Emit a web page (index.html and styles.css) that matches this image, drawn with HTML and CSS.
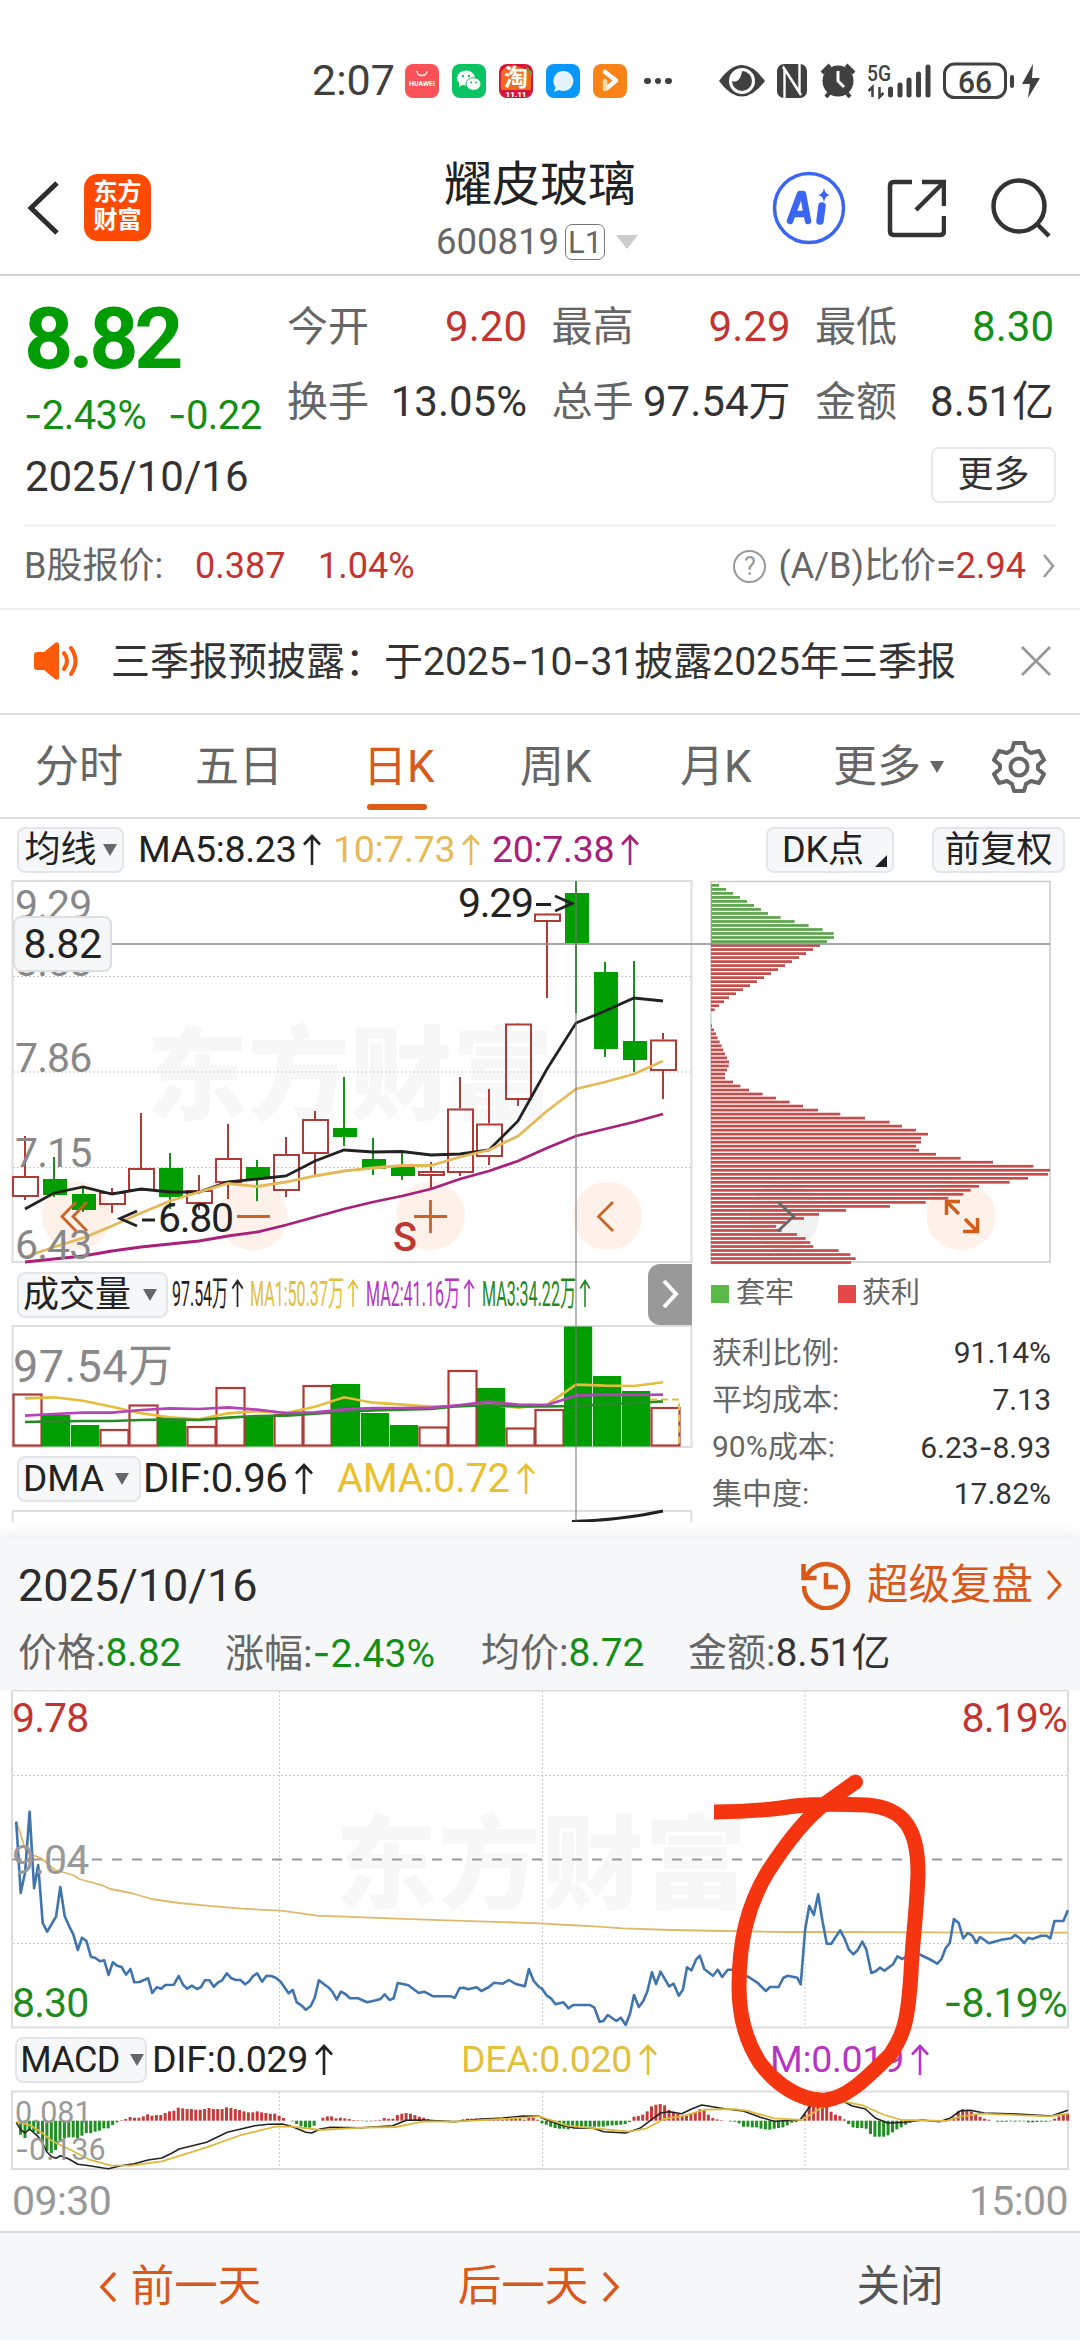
FILE: index.html
```html
<!DOCTYPE html>
<html lang="zh-CN">
<head>
<meta charset="utf-8">
<meta name="viewport" content="width=device-width">
<title>耀皮玻璃 600819</title>
<link rel="stylesheet" href="styles.css">
</head>
<body>
<svg class="defs" width="0" height="0">
  <symbol id="up" viewBox="0 0 20 32" preserveAspectRatio="none"><path d="M10 31V2M2 10.500L10 2l8 8.500" fill="none" stroke="currentColor" stroke-width="2.600"/></symbol>
</svg>
<div class="screen">
  <div class="statusbar">
    <span class="clock">2:07</span>
    <div class="apps">
      <svg width="34" height="34" viewBox="0 0 34 34"><rect width="34" height="34" rx="8" fill="#fb5257"/><path d="M12 7c0 6 10 6 10 0" fill="none" stroke="#fff" stroke-width="1.300"/><text x="17" y="22" font-size="6.500" font-weight="700" text-anchor="middle" fill="#fff" textLength="26" lengthAdjust="spacingAndGlyphs">HUAWEI</text></svg>
      <svg width="34" height="34" viewBox="0 0 34 34"><rect width="34" height="34" rx="8" fill="#09c463"/><ellipse cx="14" cy="14" rx="9" ry="7.500" fill="#fff"/><path d="M7 18l0 5 5-3z" fill="#fff"/><ellipse cx="21.500" cy="20" rx="7.500" ry="6.300" fill="#fff" stroke="#09c463"/><circle cx="11" cy="12" r="1.200" fill="#09c463"/><circle cx="17" cy="12" r="1.200" fill="#09c463"/><circle cx="19" cy="18.500" r="1" fill="#09c463"/><circle cx="24" cy="18.500" r="1" fill="#09c463"/></svg>
      <svg width="34" height="34" viewBox="0 0 34 34"><rect width="34" height="34" rx="8" fill="#d8143c"/><path d="M2 8Q8 0 17 2T32 8V26H2z" fill="#f06a1d"/><path d="M26 1l7 7v5z" fill="#5aa832"/><text x="17" y="22" font-size="24" font-weight="700" text-anchor="middle" fill="#fff">淘</text><text x="17" y="32.500" font-size="8" font-weight="900" text-anchor="middle" fill="#fff">11.11</text></svg>
      <svg width="34" height="34" viewBox="0 0 34 34"><rect width="34" height="34" rx="8" fill="#0897fb"/><path d="M17 7a10 10 0 1 1-4 19l-5 2 1.500-5A10 10 0 0 1 17 7z" fill="#e6f4ff"/></svg>
      <svg width="34" height="34" viewBox="0 0 34 34"><rect width="34" height="34" rx="8" fill="#fa8317"/><path d="M12 8l11 8.500L14 24" fill="none" stroke="#fff" stroke-width="4.500" stroke-linecap="round" stroke-linejoin="round"/><path d="M12 17v8" stroke="#ffd9a8" stroke-width="4.500" stroke-linecap="round"/></svg>
    </div>
    <span class="dots"><i></i><i></i><i></i></span>
    <svg class="sys" width="324" height="40" viewBox="718 61 324 40" fill="#404040">
      <path d="M719 81Q742 49 765 81Q742 112 719 81z"/><circle cx="742" cy="81" r="13" fill="#fff"/><path d="M742 71a10 10 0 1 1-10 10c4 2 9-1 10-10z"/>
      <rect x="777" y="64" width="30" height="34" rx="7"/><path d="M784.500 98V69L801 95M799.500 64V92L783 67" fill="none" stroke="#fff" stroke-width="2.400"/>
      <circle cx="838" cy="81" r="15.500"/><path d="M822 73l8-8M854 73l-8-8M826 97l4-5M850 97l-4-5" stroke="#404040" stroke-width="4"/><path d="M838 71v10l6 6" fill="none" stroke="#fff" stroke-width="3"/>
      <text x="867" y="80.500" font-size="22" font-weight="500" textLength="24" lengthAdjust="spacingAndGlyphs">5G</text>
      <path d="M872.500 97v-10l-4 4M879.500 87v10l4-4" fill="none" stroke="#404040" stroke-width="2.500"/>
      <path d="M890.500 89v6M900 85v10M909 80v15M918.500 74v21M928 67v28" stroke="#404040" stroke-width="5" stroke-linecap="round"/>
      <rect x="944.500" y="64" width="61" height="33.500" rx="10" fill="none" stroke="#404040" stroke-width="3"/>
      <path d="M1012 77v9" stroke="#404040" stroke-width="4" stroke-linecap="round"/>
      <text x="975" y="92.500" font-size="31" font-weight="500" text-anchor="middle" textLength="34" lengthAdjust="spacingAndGlyphs">66</text>
      <path d="M1033 64l-11 20h8l-2 14 12-20h-8z"/>
    </svg>
  </div>

  <header class="header">
    <div class="head-left">
      <svg width="34" height="56" viewBox="0 0 34 56"><path d="M31 3L5 28l26 25" fill="none" stroke="#2d2d2d" stroke-width="5"/></svg>
      <span class="logo">东方<br>财富</span>
    </div>
    <div class="head-title">
      <h1>耀皮玻璃</h1>
      <p><span>600819</span><b>L1</b><i></i></p>
    </div>
    <div class="head-right">
      <svg width="74" height="74" viewBox="0 0 74 74"><circle cx="37" cy="37" r="34.500" fill="none" stroke="#3b66f4" stroke-width="3.500"/><path d="M18 50L28 23h3l5 27M22 43h12" fill="none" stroke="#3b66f4" stroke-width="6.500" stroke-linejoin="round" stroke-linecap="round"/><path d="M50 35l-2 15" stroke="#3b66f4" stroke-width="7.500" stroke-linecap="round"/><path d="M52 17q1 6 6 7-5 1-6 7-1-6-6-7 5-1 6-7z" fill="#3b66f4"/></svg>
      <svg class="share" width="60" height="60" viewBox="0 0 60 60" fill="none" stroke="#333" stroke-width="4.500"><path d="M26 4H8q-4 0-4 4v45q0 4 4 4h46q4 0 4-4V38M30 32L56 6M36 4h22v24"/></svg>
      <svg width="62" height="62" viewBox="0 0 62 62" fill="none" stroke="#333" stroke-width="4.500"><circle cx="28" cy="29" r="25.500"/><path d="M46 47l12 12"/></svg>
    </div>
  </header>

  <section class="quote">
    <div class="quote-main">
      <div class="price">
        <strong>8.82</strong>
        <p><span><u>-</u>2.43%</span><span><u>-</u>0.22</span></p>
      </div>
      <dl class="stats">
        <div><dt>今开</dt><dd class="red">9.20</dd></div>
        <div><dt>最高</dt><dd class="red">9.29</dd></div>
        <div><dt>最低</dt><dd class="green">8.30</dd></div>
        <div><dt>换手</dt><dd>13.05%</dd></div>
        <div><dt>总手</dt><dd>97.54万</dd></div>
        <div><dt>金额</dt><dd>8.51亿</dd></div>
      </dl>
    </div>
    <div class="quote-date"><span>2025/10/16</span><button>更多</button></div>
    <div class="bshare">
      <span class="b1">B股报价:</span><span class="b2 red">0.387</span><span class="b3 red">1.04%</span>
      <span class="help">?</span><span>(A/B)比价=<em class="red">2.94</em></span>
      <svg width="14" height="26" viewBox="0 0 14 26"><path d="M2 2l9 11-9 11" fill="none" stroke="#999" stroke-width="2.500"/></svg>
    </div>
  </section>

  <section class="notice">
    <svg width="48" height="40" viewBox="0 0 48 40"><path d="M1 14q0-3 3-3h7L22 2q4-2 4 2v32q0 4-4 2L11 29H4q-3 0-3-3z" fill="#ff5a0a"/><path d="M31 12q6 8 0 16M38 7q9 13 0 26" fill="none" stroke="#ff5a0a" stroke-width="4" stroke-linecap="round"/></svg>
    <p>三季报预披露：于2025<u>-</u>10<u>-</u>31披露2025年三季报</p>
    <svg width="30" height="30" viewBox="0 0 30 30"><path d="M1 1l28 28M29 1L1 29" stroke="#999" stroke-width="2.800"/></svg>
  </section>

  <nav class="tabs">
    <span>分时</span><span>五日</span><span class="on">日K</span><span>周K</span><span>月K</span><span>更多<i class="tri"></i></span>
    <svg width="54" height="54" viewBox="0 0 54 54" fill="none" stroke="#666" stroke-width="4"><path d="M22 3h10l2 7 5 3 8-2 5 9-6 5v4l6 5-5 9-8-2-5 3-2 7H22l-2-7-5-3-8 2-5-9 6-5v-4l-6-5 5-9 8 2 5-3z" stroke-linejoin="round"/><circle cx="27" cy="27" r="8.500"/></svg>
  </nav>

  <section class="kline">
    <div class="ma-row">
      <span class="chip">均线<i class="tri"></i></span>
      <span class="ma ink">MA5:8.23<svg><use href="#up"/></svg></span>
      <span class="ma gold">10:7.73<svg><use href="#up"/></svg></span>
      <span class="ma plum">20:7.38<svg><use href="#up"/></svg></span>
      <span class="chip dk">DK点<i></i></span>
      <span class="chip">前复权</span>
    </div>
    <div class="k-cols">
      <div class="k-left">
        <svg class="k-chart" width="693" height="384" viewBox="0 881 693 384">
          <text class="wm" x="146" y="1113" font-size="102" textLength="408">东方财富</text>
          <rect x="12.500" y="882" width="679" height="381" class="frame"/>
          <path class="dotline" d="M13 977.500H692M13 1073H692M13 1168.500H692"/>
          <g class="soft"><circle cx="76.500" cy="1217" r="34.500"/><circle cx="253" cy="1217" r="34.500"/><circle cx="430.500" cy="1217" r="34.500"/><circle cx="607.500" cy="1217" r="34.500"/></g>
          <g id="candles"></g>
          <g id="k-lines"></g>
          <g class="axis"><text x="15" y="920">9.29</text><text x="15" y="977">8.58</text><text x="15" y="1073">7.86</text><text x="15" y="1168">7.15</text><text x="15" y="1260">6.43</text></g>
          <g class="note"><text x="458" y="918" textLength="76">9.29</text><path d="M536 905.500h15M555 897l17 7.500-17 7.500M137 1212l-17 7.500 17 7.500M142 1221h13"/><text x="158" y="1233" textLength="76">6.80</text></g>
          <path class="tool" d="M76 1203l-14 14.500 14 14.500M87 1203l-14 14.500 14 14.500M237 1217.500h33M414 1217.500h33M430.500 1201v33M613 1203l-14.500 14.500 14.500 14.500"/>
          <text x="393" y="1252" font-size="41" font-weight="500" fill="#be3632" textLength="24" lengthAdjust="spacingAndGlyphs">S</text>
        </svg>
        <div class="vol-row">
          <span class="chip">成交量<i class="tri"></i></span>
          <svg width="420" height="46" viewBox="172 1273 420 46" font-size="35">
            <text x="172" y="1307" textLength="56" lengthAdjust="spacingAndGlyphs" fill="#222">97.54万</text><use href="#up" x="231" y="1280" width="13" height="29" color="#222" />
            <text x="250" y="1307" textLength="94" lengthAdjust="spacingAndGlyphs" fill="#e4bd3a">MA1:50.37万</text><use href="#up" x="347" y="1280" width="12" height="29" color="#e4bd3a"/>
            <text x="366" y="1307" textLength="94" lengthAdjust="spacingAndGlyphs" fill="#b437c0">MA2:41.16万</text><use href="#up" x="463" y="1280" width="12" height="29" color="#b437c0"/>
            <text x="482" y="1307" textLength="94" lengthAdjust="spacingAndGlyphs" fill="#1f8a20">MA3:34.22万</text><use href="#up" x="579" y="1280" width="12" height="29" color="#1f8a20"/>
          </svg>
          <span class="next"><svg width="20" height="30" viewBox="0 0 20 30"><path d="M4 2l12 13L4 28" fill="none" stroke="#fff" stroke-width="4"/></svg></span>
        </div>
        <svg class="v-chart" width="693" height="124" viewBox="0 1326 693 124">
          <rect x="12.500" y="1327" width="679" height="121" class="frame"/>
          <text x="13" y="1383" font-size="45" fill="#888" textLength="160">97.54万</text>
          <g id="volume"></g>
          <path d="M650 1400.500H679V1446" fill="none" stroke="#e4bd3a" stroke-width="2" stroke-dasharray="7 4"/>
        </svg>
        <div class="dma-row">
          <span class="chip">DMA<i class="tri"></i></span>
          <span class="ma ink">DIF:0.96<svg><use href="#up"/></svg></span>
          <span class="ma yolk">AMA:0.72<svg><use href="#up"/></svg></span>
        </div>
        <svg width="693" height="13" viewBox="0 1510 693 13"><path class="frame" d="M12.500 1523V1512H691.500V1523"/><path d="M572 1522.500Q622 1521 663 1512" fill="none" stroke="#222" stroke-width="3"/></svg>
      </div>
      <div class="k-right">
        <svg width="345" height="384" viewBox="708 881 345 384">
          <rect x="711" y="882.500" width="339" height="380.500" fill="none" stroke="#ccc" stroke-width="1.500"/>
          <circle cx="961" cy="1217" r="34.500" fill="#fef1e9"/><circle cx="784.500" cy="1217" r="34.500" fill="#f2f2f2"/>
          <g id="chips"></g>
          <path d="M778 1203l15.500 14.500-15.500 14.500" fill="none" stroke="#666" stroke-width="2.800"/>
          <path d="M946.500 1216v-13.500h13.500M947 1203l12 12M977.500 1219v13.500H963M977 1232l-12-12" fill="none" stroke="#d55d1a" stroke-width="3.500"/>
        </svg>
        <div class="legend"><i class="g"></i><span>套牢</span><i class="r"></i><span>获利</span></div>
        <dl class="cost">
          <div><dt>获利比例:</dt><dd>91.14%</dd></div>
          <div><dt>平均成本:</dt><dd>7.13</dd></div>
          <div><dt>90%成本:</dt><dd>6.23<u>-</u>8.93</dd></div>
          <div><dt>集中度:</dt><dd>17.82%</dd></div>
        </dl>
      </div>
      <svg class="cross" width="1080" height="641" viewBox="0 882 1080 641"><path d="M112 945H1050" stroke="#888" stroke-width="1.300"/><path d="M576 882V1522" stroke="#777" stroke-opacity=".7" stroke-width="1.500"/></svg>
      <span class="cross-label">8.82</span>
    </div>
  </section>

  <section class="replay">
    <div class="replay-head">
      <div class="r1"><span>2025/10/16</span>
        <a><svg width="50" height="50" viewBox="0 0 50 50" fill="none" stroke="#d9591a" stroke-width="4.500"><path d="M3 26A22 22 0 1 0 9 11L5 16M2.500 4v14h13M25 13v14h12"/></svg>超级复盘<svg width="18" height="32" viewBox="0 0 18 32"><path d="M3 2l12 14L3 30" fill="none" stroke="#d9591a" stroke-width="3"/></svg></a>
      </div>
      <div class="r2"><span>价格:<em class="green">8.82</em></span><span>涨幅:<em class="green"><u>-</u>2.43%</em></span><span>均价:<em class="green">8.72</em></span><span>金额:<em>8.51亿</em></span></div>
    </div>
    <svg class="m-chart" width="1080" height="340" viewBox="0 1690 1080 340">
      <text class="wm" x="335" y="1902" font-size="102" textLength="412">东方财富</text>
      <rect x="12" y="1691.500" width="1056" height="337" class="frame"/>
      <path class="dotline" d="M13 1776.500H1068M13 1944.500H1068M279.500 1692V2028M542.500 1692V2028M805 1692V2028"/>
      <path d="M12 1860.500H1068" stroke="#999" stroke-width="2" stroke-dasharray="10 10"/>
      <g id="minute"></g>
      <g class="m-axis"><text x="12" y="1733" fill="#c33430">9.78</text><text x="1067" y="1733" fill="#c33430" text-anchor="end">8.19%</text><text x="12" y="1875" fill="#999">9.04</text><text x="12" y="2018" fill="#1f8a20">8.30</text><text x="1067" y="2018" fill="#1f8a20" text-anchor="end"><tspan class="dash">-</tspan>8.19%</text></g>
    </svg>
    <div class="macd-row">
      <span class="chip">MACD<i class="tri"></i></span>
      <span class="ma ink">DIF:0.029<svg><use href="#up"/></svg></span>
      <span class="ma yolk2">DEA:0.020<svg><use href="#up"/></svg></span>
      <span class="ma mag">M:0.019<svg><use href="#up"/></svg></span>
    </div>
    <svg class="d-chart" width="1080" height="81" viewBox="0 2091 1080 81">
      <rect x="12" y="2092.500" width="1056" height="77.500" class="frame"/>
      <path class="dotline" d="M279.500 2093V2170M542.500 2093V2170M805 2093V2170"/>
      <g id="macd"></g>
      <g font-size="30.500" fill="#999"><text x="15" y="2124">0.081</text><text x="15" y="2161"><tspan class="dash">-</tspan>0.136</text></g>
    </svg>
    <div class="times"><span>09:30</span><span>15:00</span></div>
  </section>

  <footer class="foot">
    <span class="o"><svg width="20" height="34" viewBox="0 0 20 34"><path d="M17 3L4 17l13 14" fill="none" stroke="#d9591a" stroke-width="3.500"/></svg>前一天</span>
    <span class="o">后一天<svg width="20" height="34" viewBox="0 0 20 34"><path d="M3 3l13 14L3 31" fill="none" stroke="#d9591a" stroke-width="3.500"/></svg></span>
    <span>关闭</span>
  </footer>
  <svg class="scribble" width="240" height="350" viewBox="700 1765 240 350"><path d="M714 1812C746 1812 770 1810 795 1806C820 1803 845 1804 867 1805C905 1808 918 1830 918 1873C917 1910 912 1945 911 1973C908 2020 904 2035 890 2055C870 2074 850 2097 826 2100C800 2102 775 2083 760 2063C745 2040 739 2015 739 1987C739 1940 748 1905 767 1873C785 1845 805 1818 826 1803L855.500 1782" fill="none" stroke="#f53510" stroke-width="15" stroke-linejoin="round"/><circle cx="855.500" cy="1782" r="7.500" fill="#f53510"/></svg>
</div>
<script src="charts.js"></script>
</body>
</html>
```
FILE: styles.css
```css
* { box-sizing: border-box; margin: 0; padding: 0; }
body { background: #fff; font-family: Roboto, "Noto Sans CJK SC", sans-serif; color: #333; }
svg { display: block; flex: none; }
svg text { font-family: Roboto, "Noto Sans CJK SC", sans-serif; }
.defs { position: absolute; }
u { text-decoration: none; font-family: Inter, sans-serif; }
.dash { font-family: Inter, sans-serif; }
em, i { font-style: normal; }
.screen { position: relative; width: 1080px; height: 2340px; overflow: hidden; display: flex; flex-direction: column; line-height: 1; }
.red { color: #c33430; }
.green { color: #148f16; }
.ink { color: #222; }
.gold { color: #e8b956; }
.plum { color: #a8207a; }
.yolk { color: #ebc02c; }
.yolk2 { color: #e4bf3b; }
.mag { color: #b735c4; }

.statusbar { height: 114px; padding: 48px 38px 0 312px; display: flex; align-items: center; }
.clock { font-size: 43px; color: #404040; width: 93px; }
.apps { display: flex; gap: 13px; }
.dots { display: flex; gap: 4px; margin-left: 17px; }
.dots i { width: 6.500px; height: 6.500px; border-radius: 50%; background: #404040; }
.sys { margin-left: auto; }

.header { height: 162px; border-bottom: 2px solid #d4d4d4; display: grid; grid-template-columns: 380px 320px 1fr; padding: 0 27px 0 26px; }
.head-left { display: flex; align-items: center; gap: 24px; padding-top: 28px; }
.logo { width: 67px; height: 67px; border-radius: 14px; background: #ff4a04; color: #fff; font-size: 24px; font-weight: 700; line-height: 28px; text-align: center; padding-top: 4px; }
.head-title { display: flex; flex-direction: column; align-items: center; margin-left: -72px; margin-right: -20px; }
h1 { font-size: 48px; font-weight: 400; color: #222; line-height: 60px; margin-top: 41px; }
.head-title p { display: flex; align-items: center; font-size: 36.500px; color: #666; margin: 9px 6px 0 0; height: 36px; }
.head-title b { font-weight: 400; border: 1.500px solid #777; border-radius: 7px; height: 36px; width: 40px; font-size: 31px; line-height: 35px; text-align: center; margin-left: 6px; }
.head-title i { border: 11px solid transparent; border-top: 14px solid #ccc; border-bottom: 0; margin-left: 11px; }
.head-right { display: flex; align-items: center; justify-content: flex-end; padding-top: 28px; }
.share { margin: 0 45px 0 40px; }

.quote { height: 334px; border-bottom: 2px solid #eee; padding: 0 24px; }
.quote-main { height: 160px; display: flex; }
.price { width: 263px; color: #009c04; }
.price strong { display: block; font-size: 86px; letter-spacing: -4.500px; line-height: 86px; margin-top: 20px; }
.price p { display: flex; gap: 22px; font-size: 40px; letter-spacing: -.600px; margin-top: 13px; color: #148f16; white-space: nowrap; }
.stats { width: 767px; display: grid; grid-template-columns: 240px 239px 239px; column-gap: 24.500px; grid-auto-rows: 75px; padding-top: 14px; }
.stats div { display: flex; justify-content: space-between; align-items: center; white-space: nowrap; }
.stats dt { font-size: 41px; color: #666; }
.stats dd { font-size: 42px; }
.quote-date { height: 91px; border-bottom: 3px solid #f3f3f3; display: flex; justify-content: space-between; font-size: 42px; padding: 20px 0 0 1px; }
.quote-date button { margin-top: -9px; width: 125px; height: 56px; border: 2px solid #e6e8ea; border-radius: 8px; background: #fff; font: 36px/48px Roboto, "Noto Sans CJK SC", sans-serif; color: #333; }
.bshare { display: flex; align-items: center; height: 79px; font-size: 36px; color: #666; white-space: nowrap; }
.b1 { width: 171px; }
.b2 { width: 123px; }
.b3 { flex: 1; }
.help { width: 33px; height: 33px; border: 2.500px solid #999; border-radius: 50%; font-size: 25px; line-height: 29px; text-align: center; color: #999; margin-right: 12px; }
.bshare svg { margin-left: 16px; }

.notice { height: 105px; border-bottom: 2px solid #ddd; display: flex; align-items: center; padding: 0 29px 0 33px; font-size: 39px; }
.notice p { flex: 1; margin-left: 30px; white-space: nowrap; }

.tabs { height: 104px; border-bottom: 2px solid #ddd; display: grid; grid-template-columns: 160px 168px 157px 160px 153px 159px 1fr; padding: 2px 0 0 35px; align-items: center; font-size: 44px; color: #666; }
.tabs span { display: flex; align-items: center; height: 100%; white-space: nowrap; }
.tabs .on { color: #d9591a; position: relative; }
.tabs .on::after { content: ""; position: absolute; left: 4px; bottom: 7px; width: 60px; height: 6px; border-radius: 3px; background: #dd5b14; }
.tri { border: 7px solid transparent; border-top: 12px solid #666; border-bottom: 0; display: inline-block; }
.tabs .tri { margin-left: 9px; }

.kline { height: 722px; background: #fff; }
.ma-row { height: 62px; display: grid; grid-template-columns: 121px 195px 159px 274px 166px 133px; padding: 8px 0 0 17px; align-items: start; }
.chip { display: inline-flex; align-items: center; justify-content: center; height: 46px; border: 2px solid #e3e5e9; border-radius: 8px; background: #f6f7f9; font-size: 36px; color: #222; white-space: nowrap; }
.chip .tri { margin-left: 6px; }
.ma-row .chip:first-child { width: 107px; }
.dk { width: 128px; position: relative; padding-right: 14px; }
.dk i { position: absolute; right: 5px; bottom: 4px; border-left: 12px solid transparent; border-bottom: 12px solid #222; }
.ma { display: flex; align-items: center; font-size: 37.500px; height: 46px; white-space: nowrap; letter-spacing: -.300px; }
.ma svg { width: 20px; height: 32px; margin-left: 6px; }
.k-cols { position: relative; display: grid; grid-template-columns: 708px 345px; }
.k-left, .k-right { margin-top: -1px; }
.frame { fill: none; stroke: #ddd; stroke-width: 2; }
.dotline { fill: none; stroke: #ccc; stroke-width: 1; stroke-dasharray: 2 2; }
.wm { fill: #f7f7f7; font-weight: 900; }
.soft { fill: #fef1e9; }
.axis { font-size: 41px; fill: #888; letter-spacing: -.900px; }
.m-axis { font-size: 41px; letter-spacing: -.900px; }
.note { font-size: 41px; fill: #222; }
.note path { fill: none; stroke: #222; stroke-width: 2.800; }
.tool { fill: none; stroke: #cb6326; stroke-width: 2.800; }
.vol-row { height: 61px; display: grid; grid-template-columns: 155px 476px 44px; padding-left: 17px; }
.vol-row .chip { width: 151px; margin-top: 8px; font-size: 36px; justify-content: flex-start; padding-left: 4px; }
.vol-row .chip .tri { margin-left: 12px; }
.vol-row > svg { margin-top: 8px; }
.next { height: 61px; border-radius: 12px 0 0 12px; background: #999; display: flex; align-items: center; justify-content: center; }
.dma-row { height: 60px; display: grid; grid-template-columns: 126px 194px 300px; padding: 7px 0 0 17px; }
.dma-row .chip { width: 124px; font-size: 37px; justify-content: flex-start; padding-left: 4px; }
.dma-row .chip .tri { margin-left: 11px; }
.dma-row .ma { font-size: 40px; }
.cross { position: absolute; left: 0; top: 0; }
.cross-label { position: absolute; left: 13px; top: 35px; width: 99px; height: 56px; border: 2px solid #dcdee2; border-radius: 8px; background: #f6f7f9; color: #222; font-size: 41px; letter-spacing: -.500px; line-height: 52px; text-align: center; }
.legend { display: flex; align-items: center; height: 60px; font-size: 29px; color: #666; padding-left: 3px; }
.legend i { width: 18px; height: 18px; margin-right: 7px; }
.legend .g { background: #5ab946; }
.legend .r { background: #e64949; margin: 0 6px 0 44px; }
.cost { margin-top: 6px; padding-left: 4px; }
.cost div { display: flex; justify-content: space-between; align-items: center; height: 47px; font-size: 30px; color: #666; padding-right: 2px; }
.cost dd { color: #333; }

.replay { height: 691px; }
.replay-head { height: 150px; background: #f6f7f9; padding: 22px 17px 0 18px; box-shadow: 0 -8px 12px rgba(0,0,0,.05); clip-path: inset(-18px 0 0 0); }
.r1 { display: flex; justify-content: space-between; align-items: center; font-size: 45px; height: 46px; color: #2c2c2c; }
.r1 a { display: flex; align-items: center; font-size: 41.500px; color: #d9591a; }
.r1 a svg:first-child { margin-right: 16px; }
.r1 a svg:last-child { margin-left: 12px; }
.r2 { display: grid; grid-template-columns: 207px 256px 207px 300px; font-size: 39px; margin-top: 25px; color: #666; white-space: nowrap; height: 40px; align-items: center; }
.r2 em:not(.green) { color: #333; }
.m-chart { margin-top: -1px; }
.macd-row { height: 61px; display: grid; grid-template-columns: 137px 309px 309px 200px; padding: 8px 0 0 15px; }
.macd-row .chip { width: 132px; font-size: 36px; letter-spacing: -.600px; padding-left: 2px; }
.macd-row .chip .tri { margin-left: 10px; }
.times { display: flex; justify-content: space-between; padding: 10px 12px; font-size: 41px; letter-spacing: -.600px; color: #999; }

.foot { height: 109px; background: #f6f7f9; border-top: 2px solid #d8d8d8; display: grid; grid-template-columns: 359px 361px 360px; align-items: center; font-size: 43.500px; color: #555; }
.foot span { display: flex; align-items: center; justify-content: center; gap: 13px; }
.foot .o { color: #d9591a; }
.scribble { position: absolute; left: 700px; top: 1765px; }
```
FILE: charts.js
```js
const NS = 'http://www.w3.org/2000/svg';
function add(id, tag, attrs) {
  const el = document.createElementNS(NS, tag);
  for (const k in attrs) el.setAttribute(k, attrs[k]);
  document.getElementById(id).appendChild(el);
}
function line(id, ys, color, w, map) {
  add(id, 'polyline', { points: ys.map((y, i) => (25 + 29 * i) + ',' + map(y)).join(' '), fill: 'none', stroke: color, 'stroke-width': w });
}
const RED = '#b03a36', GREEN = '#009e00';

// Daily candles: up flag, high, body top, body bottom, low
const days = [
  [1,1137,1177,1198,1201],[0,1158,1180,1196,1198],[0,1188,1195,1211,1213],[1,1189,1193,1206,1214],[1,1114,1169,1192,1192],
  [0,1154,1169,1198,1210],[1,1176,1191,1205,1211],[1,1125,1159,1184,1200],[0,1161,1168,1180,1202],[1,1138,1155,1192,1198],
  [1,1112,1120,1155,1176],[0,1078,1129,1138,1147],[0,1139,1160,1170,1176],[0,1153,1168,1177,1181],[1,1163,1172,1177,1190],
  [1,1078,1109.5,1174,1177],[1,1090,1124.5,1158,1166],[1,1025,1024.5,1101,1107],[1,915,914.5,923,999],[0,882,894,944,1014],
  [0,963,973,1050,1058],[0,962,1042,1061,1073],[1,1034,1040.5,1072,1100]];
days.forEach(([up, h, t, b, l], i) => {
  const x = 25 + 29 * i;
  if (up) {
    add('candles', 'path', { d: `M${x} ${h}V${t}M${x} ${b}V${l}`, stroke: RED, 'stroke-width': 2 });
    add('candles', 'rect', { x: x - 12, y: t + 1, width: 25, height: b - t - 2, fill: 'none', stroke: RED, 'stroke-width': 2 });
  } else {
    add('candles', 'path', { d: `M${x} ${h}V${l}`, stroke: '#159018', 'stroke-width': 2 });
    add('candles', 'rect', { x: x - 11, y: t, width: 24, height: b - t, fill: GREEN });
  }
});
const same = y => y;
line('k-lines', [1263,1260,1257,1252,1248,1245,1242,1237,1233,1226,1218,1210,1203,1197,1190,1180,1172,1162,1149,1137,1130,1123,1115], '#a8207a', 2.8, same);
line('k-lines', [1210,1194,1188,1195,1190,1193,1193,1183,1180,1177,1162,1151,1153,1152.5,1156,1155,1151,1122,1070,1024,1012,999,1002], '#222', 2.8, same);
line('k-lines', [1258,1248,1239,1227,1214,1202,1193,1184.5,1187.5,1183,1177,1172,1169,1166.5,1166.5,1158,1151,1137,1112,1090,1083,1075,1062], '#e5b95a', 2.8, same);

// Volume: up flag, bar top
[[1,1394.5],[0,1416],[0,1426],[1,1430],[1,1405.5],[0,1418],[1,1427],[1,1388],[0,1417],[1,1415],[1,1386],[0,1385],[0,1414],[0,1426],[1,1427.5],[1,1371],[0,1389],[1,1428.5],[1,1410],[0,1327.5],[0,1377],[0,1392],[1,1408]].forEach(([up, t], i) => {
  const x = 12.5 + 29 * i;
  if (up) add('volume', 'rect', { x: x + 1, y: t + 1, width: 28, height: 1445.5 - t, fill: 'none', stroke: RED, 'stroke-width': 2.2 });
  else add('volume', 'rect', { x: x + .5, y: t, width: 28.2, height: 1447.5 - t, fill: GREEN });
});
const vy = y => 1260 + y / 3;
line('volume', [418,415,425,443,463,475,481,463,457,462,443,415,431,437,443,443,437,446,437,377,380,381,370], '#e4bd3a', 2.6, vy);
line('volume', [489,487,486,486,483,481,483,476,471,470,464,458,454,452,450,441,439,442,442,441,436,432,427], '#268a27', 2.6, vy);
line('volume', [470,465,461,461,453,448,450,445,452,462,460,451,447,447,446,438,428,437,438,410,407,408,407], '#b244b8', 2.6, vy);

// Holding cost distribution, bar lengths in thirds of a pixel
const chips = [24,45,66,87,108,129,150,171,209,251,293,335,368,369,348,327,306,285,264,243,222,201,180,159,138,117,96,75,54,39,24,11,0,0,0,3,9,15,20,26,32,37,42,48,54,53,48,42,42,66,88,114,155,195,236,276,321,388,462,536,573,615,651,630,630,615,624,675,749,846,967,1017,1011,951,896,804,779,757,712,644,537,405,324,279,224,195,212,258,284,298,307,383,418,434,420];
chips.forEach((w, i) => w && add('chips', 'rect', { x: 711, y: 885 + 4.013 * i, width: w / 3, height: 2.7, fill: i < 15 ? '#5aa54a' : '#c34d4b' }));
add('chips', 'rect', { x: 711, y: 885, width: 1, height: 58, fill: '#6cc45a' });

// Intraday curves, traced on a finer grid in two halves
function curve(id, half, pts, color, w) {
  const ox = half ? 540 : 0, oy = half ? 1740 : 1770;
  add(id, 'polyline', { points: pts.trim().split(/\s+/).map(p => { const [x, y] = p.split(',').map(Number); return (ox + x / 2.904).toFixed(1) + ',' + (oy + y / 3).toFixed(1); }).join(' '), fill: 'none', stroke: color, 'stroke-width': w, 'stroke-linejoin': 'round' });
}
curve('minute', 0, '47,158 60,195 73,240 90,256 120,268 160,303 213,318 230,330 300,350 320,360 380,372 440,390 520,402 600,410 700,419 815,425 860,431 920,440 1000,443 1150,449 1300,454 1568,463', '#e0b968', 1.8);
curve('minute', 1, '0,553 80,558 160,562 240,568 380,573 540,576 700,579 900,579 1100,580 1533,581', '#e0b968', 1.8);
curve('minute', 0, '47,158 60,372 73,310 86,128 99,358 111,288 124,462 137,488 150,465 163,442 175,354 188,442 201,472 213,496 226,543 238,506 251,516 264,563 277,567 290,577 303,574 315,618 328,580 340,590 353,594 366,617 379,600 390,640 405,639 430,628 442,672 455,655 468,659 480,648 505,647 519,621 532,648 544,659 557,650 572,660 583,655 595,634 608,634 621,653 634,640 645,634 659,613 672,628 685,633 698,633 712,646 724,637 735,621 747,613 761,638 774,620 788,621 802,627 815,638 838,673 850,663 862,700 875,709 888,722 902,712 914,686 926,634 940,645 955,656 966,669 978,692 990,668 1003,675 1016,688 1040,688 1066,700 1092,694 1105,690 1117,676 1131,693 1143,688 1155,642 1170,645 1186,649 1216,672 1232,668 1258,682 1308,682 1321,686 1335,657 1347,656 1360,661 1384,655 1398,666 1420,654 1435,641 1460,644 1478,633 1498,645 1524,652 1536,600 1550,636 1567,656', '#3f74ad', 2.6);
curve('minute', 1, '-1,746 5,748 20,770 32,778 45,796 68,790 83,808 96,798 145,798 158,806 173,848 184,846 197,828 222,846 235,836 249,858 262,822 273,768 287,804 300,786 312,757 325,700 337,735 350,698 375,742 388,734 403,770 415,752 427,685 440,694 453,662 464,650 477,690 502,710 516,692 529,714 545,692 560,692 580,705 606,714 630,730 656,756 668,744 693,744 707,716 720,710 747,716 757,736 770,570 782,500 795,528 808,466 820,545 833,614 846,614 860,592 872,574 884,598 897,632 910,646 922,634 936,608 948,632 962,702 975,697 987,686 1000,695 1025,676 1038,652 1052,660 1075,645 1100,645 1130,660 1154,674 1166,660 1178,628 1190,612 1202,540 1216,552 1229,598 1243,582 1255,590 1267,612 1278,594 1304,613 1340,602 1368,598 1380,588 1394,598 1406,612 1418,596 1430,600 1455,590 1470,590 1482,598 1494,546 1520,546 1533,514', '#3f74ad', 2.6);

const hist = [-42,-52,-30,-33,-40,-65,-90,-97,-88,-60,-53,-50,-50,-53,-45,-37,-37,-33,-30,-23,-23,-13,-5,1,5,11,9,9,13,19,15,17,17,23,28,30,39,37,35,35,33,33,35,38,35,35,35,40,38,35,32,28,25,25,28,25,23,21,21,15,8,0,-2,-10,-17,-21,-21,-15,0,9,13,13,7,9,7,5,2,1,-1,-2,-2,1,2,8,6,6,17,21,23,21,17,12,9,5,2,1,-1,-1,-2,-1,0,4,6,6,7,6,6,5,6,7,6,6,7,7,6,3,10,10,3,
-8,-12,-18,-22,-24,-24,-26,-22,-22,-18,-18,-18,-18,-18,-18,-15,-14,-13,-12,-10,-4,12,14,18,28,43,48,50,46,32,27,20,14,14,22,26,34,32,18,8,4,1,0,-2,-3,-8,-18,-18,-20,-20,-24,-26,-27,-24,-22,-20,-14,-6,-4,0,20,60,75,85,72,45,27,18,14,4,-10,-20,-22,-22,-24,-40,-48,-48,-48,-44,-35,-26,-20,-12,-6,-3,-1,0,0,1,0,0,-2,4,10,28,35,33,28,20,12,6,3,0,-3,-3,-3,-2,-3,-2,-2,-5,-5,-4,-3,-3,-2,6,13,18,20];
hist.forEach((v, i) => {
  const x = 16.2 + 1051.5 * (i + 1) / hist.length, h = Math.max(Math.abs(v) / 3, .5);
  if (v) add('macd', 'rect', { x: (x - 1.5).toFixed(1), y: v > 0 ? 2121.7 - h : 2121.7, width: 3, height: h, fill: v > 0 ? '#c23c3a' : '#1f8f22' });
});
curve('macd', 0, '47,1060 60,1082 73,1092 86,1080 110,1102 125,1125 137,1150 150,1163 163,1168 175,1160 200,1170 226,1186 260,1190 300,1197 315,1199 350,1190 390,1184 430,1173 470,1167 500,1152 520,1140 600,1120 660,1090 700,1080 740,1070 780,1066 820,1065 850,1073 888,1090 905,1092 930,1080 960,1075 1050,1076 1140,1070 1180,1054 1230,1053 1320,1058 1400,1050 1460,1047 1520,1041 1568,1042', '#222', 1.6);
curve('macd', 1, '0,1135 60,1158 100,1167 155,1168 185,1178 249,1182 290,1168 320,1145 350,1122 375,1118 412,1124 440,1110 470,1098 540,1110 590,1116 640,1135 680,1147 755,1143 782,1105 820,1070 870,1080 905,1100 945,1110 975,1138 1010,1152 1060,1150 1110,1143 1160,1148 1190,1138 1220,1116 1250,1114 1290,1122 1400,1126 1485,1131 1533,1114', '#222', 1.6);
curve('macd', 0, '47,1058 90,1070 120,1090 150,1115 200,1140 260,1172 320,1189 380,1190 470,1177 600,1135 700,1098 800,1073 850,1073 930,1083 1050,1076 1150,1074 1230,1057 1320,1058 1460,1050 1568,1043', '#dcb83c', 1.8);
curve('macd', 1, '0,1133 80,1160 160,1168 260,1178 310,1168 360,1140 420,1130 480,1112 560,1110 600,1115 680,1138 760,1143 820,1105 870,1085 940,1100 1000,1128 1050,1143 1180,1146 1220,1133 1280,1124 1480,1132 1533,1124', '#dcb83c', 1.8);
```
